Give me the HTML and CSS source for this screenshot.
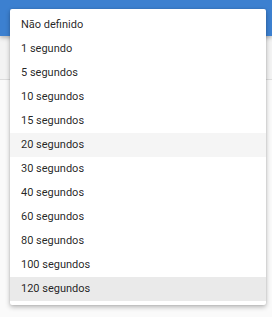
FILE: index.html
```html
<!DOCTYPE html>
<html lang="pt">
<head>
<meta charset="utf-8">
<link rel="stylesheet" href="styles.css">
</head>
<body>
<div class="page">
  <header class="toolbar"></header>
  <div class="subbar"></div>
  <div class="content"></div>
  <ul class="menu">
    <li class="item">Não definido</li>
    <li class="item">1 segundo</li>
    <li class="item">5 segundos</li>
    <li class="item">10 segundos</li>
    <li class="item">15 segundos</li>
    <li class="item hover">20 segundos</li>
    <li class="item">30 segundos</li>
    <li class="item">40 segundos</li>
    <li class="item">60 segundos</li>
    <li class="item">80 segundos</li>
    <li class="item">100 segundos</li>
    <li class="item selected">120 segundos</li>
  </ul>
</div>
</body>
</html>
```
FILE: styles.css
```css
html, body {
  margin: 0;
  padding: 0;
  width: 272px;
  height: 317px;
  overflow: hidden;
  background: #fafafa;
  font-family: Roboto, "Liberation Sans", sans-serif;
}
.page {
  position: relative;
  height: 317px;
  display: flex;
  flex-direction: column;
}
.toolbar {
  height: 36px;
  background: #3c80d0;
  box-shadow: 0 2px 4px rgba(0,0,0,0.25);
  position: relative;
  z-index: 1;
}
.subbar {
  height: 43px;
  background: #f3f3f3;
  border-bottom: 1px solid #dcdcdc;
}
.content {
  flex: 1;
  background: #fafafa;
}
.menu {
  position: absolute;
  left: 10px;
  top: 9px;
  width: 256px;
  margin: 0;
  padding: 4px 0;
  list-style: none;
  background: #fff;
  border-radius: 2px;
  box-shadow: 0 2px 5px rgba(0,0,0,0.28), 0 0 2px rgba(0,0,0,0.12);
  z-index: 2;
}
.item {
  height: 24px;
  line-height: 24px;
  padding-left: 11px;
  font-size: 11px;
  color: rgba(0,0,0,0.87);
}
.item.hover {
  background: #f5f5f5;
}
.item.selected {
  background: #eaeaea;
}
```
